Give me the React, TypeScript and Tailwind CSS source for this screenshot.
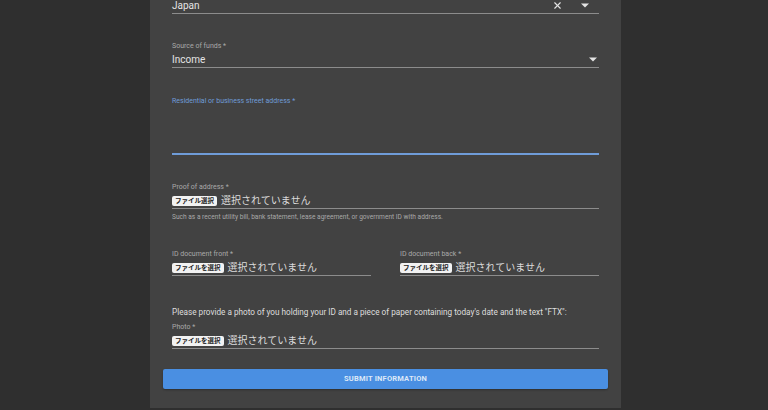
import { X } from 'lucide-react';

const font = { fontFamily: 'Roboto, "Noto Sans CJK JP", sans-serif' };

function Caret({ className = '' }: { className?: string }) {
  return (
    <svg className={className} width="8" height="5" viewBox="0 0 10 5" fill="currentColor">
      <path d="M0 0l5 5 5-5z" />
    </svg>
  );
}

function FileInput({ label, short }: { label: string; short?: boolean }) {
  return (
    <div>
      <div className="h-[10px] text-[7px] leading-[10px] text-[#a9a9a9]">{label}</div>
      <div className="mt-[1px] h-[16px] flex items-center gap-[4px] border-b border-[#8c8c8c]">
        <span className="h-[10px] px-[3px] bg-[#f2f2f2] rounded-[2px] text-[6.5px] leading-[10px] font-bold text-[#222]">
          {short ? 'ファイル選択' : 'ファイルを選択'}
        </span>
        <span className="text-[10px] leading-[16px] text-[#dcdcdc]">選択されていません</span>
      </div>
    </div>
  );
}

export default function App() {
  return (
    <div className="h-[410px] w-[768px] overflow-hidden bg-[#2f2f2f]" style={font}>
      <div className="ml-[150px] w-[471px] h-[408px] overflow-hidden bg-[#424242] px-[13px]">
        <div className="px-[9px]">
          {/* Country */}
          <div className="-mt-[2px] h-[16px] flex items-center border-b border-[#8c8c8c] text-[10px] text-[#e4e4e4]">
            <span className="flex-1">Japan</span>
            <X className="w-[11px] h-[11px] text-[#e4e4e4] mr-[18px]" strokeWidth={2.5} />
            <Caret className="text-[#e4e4e4] mr-[10px]" />
          </div>

          {/* Source of funds */}
          <div className="mt-[27px] h-[10px] text-[7px] leading-[10px] text-[#a9a9a9]">Source of funds *</div>
          <div className="mt-[1px] h-[16px] flex items-center border-b border-[#8c8c8c] text-[10px] text-[#e4e4e4]">
            <span className="flex-1">Income</span>
            <Caret className="text-[#e4e4e4] mr-[2px]" />
          </div>

          {/* Street address */}
          <div className="mt-[28px] h-[10px] text-[7px] leading-[10px] text-[#6f9cd8]">
            Residential or business street address *
          </div>
          <div className="h-[49px] border-b-2 border-[#6f9cd8]" />

          {/* Proof of address */}
          <div className="mt-[27px]">
            <FileInput label="Proof of address *" short />
            <div className="mt-[3px] h-[10px] text-[6.6px] leading-[10px] text-[#a9a9a9]">
              Such as a recent utility bill, bank statement, lease agreement, or government ID with address.
            </div>
          </div>

          {/* ID documents */}
          <div className="mt-[27px] grid grid-cols-2 gap-[29px]">
            <FileInput label="ID document front *" />
            <FileInput label="ID document back *" />
          </div>

          {/* Photo */}
          <p className="mt-[30px] h-[12px] text-[8.2px] leading-[12px] text-[#dedede]">
            Please provide a photo of you holding your ID and a piece of paper containing today's date and the text "FTX":
          </p>
          <div className="mt-[4px]">
            <FileInput label="Photo *" />
          </div>
        </div>

        <button className="mt-[20px] w-full h-[20px] rounded-[2px] bg-[#4a8fe2] text-[7.5px] font-bold tracking-[0.2px] text-[#dce8f8] shadow-[0_1px_2px_rgba(0,0,0,0.3)]">
          SUBMIT INFORMATION
        </button>
      </div>
    </div>
  );
}
